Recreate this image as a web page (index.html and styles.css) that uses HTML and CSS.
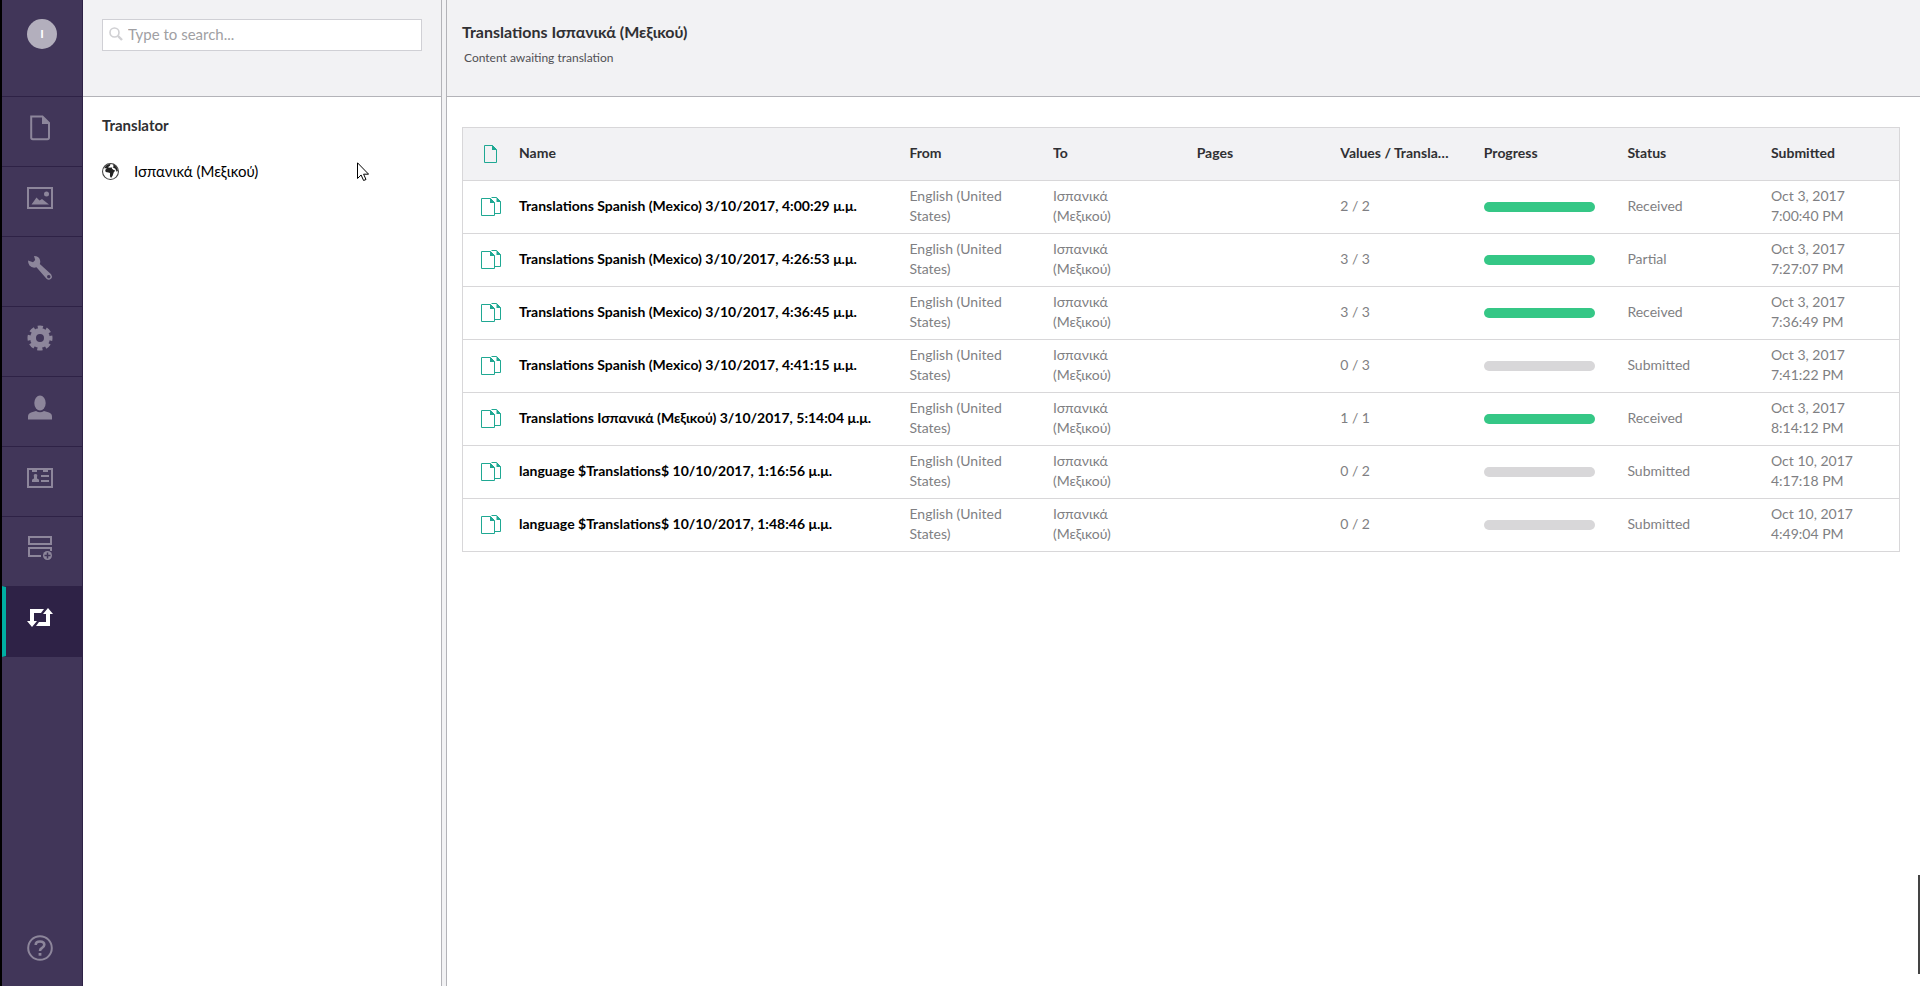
FILE: index.html
```
<!DOCTYPE html>
<html lang="en">
<head>
    <meta charset="UTF-8">
    <title>Translations</title>
    <link rel="stylesheet" href="styles.css">
</head>
<body>
<!-- shared row icon -->
<svg class="symbols" width="0" height="0">
    <symbol id="docs" viewBox="0 0 20 20">
        <path d="M10.500.5h5l4 4v12H14" fill="none" stroke="currentColor"/>
        <path d="M15.500 0v5H20z" fill="currentColor"/>
        <path d="M.5 1.500h9l4 4v13H.5z" fill="#fff" stroke="currentColor"/>
        <path d="M9 1v5h5z" fill="currentColor"/>
    </symbol>
</svg>
<div class="app">
    <nav class="rail">
        <button class="avatar" aria-label="Profile"><span>I</span></button>
        <a class="section" href="#" aria-label="Content">
            <svg viewBox="0 0 26 26"><path d="M4.200 1.500h11.300l6.500 6.500v14.500q0 1.700-1.700 1.700H5.900q-1.700 0-1.700-1.700z" fill="none" stroke="currentColor" stroke-width="2"/><path d="M15 1v8h8z" fill="currentColor"/></svg>
        </a>
        <a class="section" href="#" aria-label="Media">
            <svg viewBox="0 0 26 26"><path d="M1 3h24v20H1z" fill="none" stroke="currentColor" stroke-width="2"/><circle cx="19.500" cy="9" r="2.500" fill="currentColor"/><path d="M4.500 19.500l5-7 3 3 2.500-1.500 7 5.500z" fill="currentColor"/></svg>
        </a>
        <a class="section" href="#" aria-label="Settings">
            <svg viewBox="0 0 26 26"><path fill="currentColor" fill-rule="evenodd" d="M1 5.500l5 1.700 2.200-2.100L7 1q5 0 6 4 .7 2-.2 4l11.300 10.200q1.800 2.300 0 4.600-2.300 2-4.600 0L9.500 12.300Q5 13.500 2.500 10.500 1 8.500 1 5.500zM21.700 19.900a1.700 1.700 0 1 0 .1 0z"/></svg>
        </a>
        <a class="section" href="#" aria-label="Developer">
            <svg viewBox="0 0 26 26"><circle cx="13" cy="13" r="7" fill="none" stroke="currentColor" stroke-width="6"/><circle cx="13" cy="13" r="10.500" fill="none" stroke="currentColor" stroke-width="4" stroke-dasharray="5 3.247" stroke-dashoffset="2.500"/></svg>
        </a>
        <a class="section" href="#" aria-label="Users">
            <svg viewBox="0 0 26 26"><ellipse cx="13" cy="8" rx="5.700" ry="7.500" fill="currentColor"/><path fill="currentColor" d="M1 24.500v-3q0-3 3-4L9 16q4 2.500 8 0l5 1.500q3 1 3 4v3z"/></svg>
        </a>
        <a class="section" href="#" aria-label="Members">
            <svg viewBox="0 0 26 26"><path d="M1 4h24v18H1z" fill="none" stroke="currentColor" stroke-width="2"/><path fill="currentColor" d="M5 3h5v4H5zM16 3h5v4h-5zM5 17v-2q0-1 2-1.500V12q-1-3 1.500-3t1.500 3v1.500q2 .5 2 1.500v2zM14 10h8v2h-8zM14 15h8v2h-8z"/></svg>
        </a>
        <a class="section" href="#" aria-label="Forms">
            <svg viewBox="0 0 26 26"><path d="M2 2h22v7H2zM24 16v-3H2v8h12" fill="none" stroke="currentColor" stroke-width="2"/><circle cx="20.500" cy="20.500" r="5.500" fill="#413659"/><circle cx="20.500" cy="20.500" r="4.500" fill="currentColor"/><path d="M20.500 17.500v6M17.500 20.500h6" stroke="#413659" stroke-width="1.500"/></svg>
        </a>
        <a class="section active" href="#" aria-label="Translation">
            <svg viewBox="0 0 26 26"><path fill="currentColor" d="M3 4h14l-3 4H7v8h3l-5 6-5-6h3zM23 21H9l3-4h7V9h-3l5-6 5 6h-3z"/></svg>
        </a>
        <a class="help" href="#" aria-label="Help">
            <svg viewBox="0 0 26 26"><circle cx="13" cy="13" r="11.800" fill="none" stroke="currentColor" stroke-width="2"/><path d="M8.700 10q0-3.500 4.300-3.500t4.300 3.300q0 1.700-2.300 3.200-2 1-2 3" fill="none" stroke="currentColor" stroke-width="2.600"/><path d="M11.600 18h2.800v2.700h-2.800z" fill="currentColor"/></svg>
        </a>
    </nav>

    <aside class="tree">
        <div class="tree-header">
            <label class="search">
                <svg viewBox="0 0 14 14"><circle cx="5.500" cy="5.500" r="4.500" fill="none" stroke="currentColor" stroke-width="1.600"/><path d="M9 9l4 4" stroke="currentColor" stroke-width="2.400"/></svg>
                <input type="text" placeholder="Type to search..." aria-label="Search">
            </label>
        </div>
        <div class="tree-body">
            <h2>Translator</h2>
            <a class="tree-item" href="#">
                <svg viewBox="0 0 16 16"><circle cx="8" cy="8" r="7.500" fill="#fff" stroke="#444"/><path fill="#222" d="M2 5Q4 1 8 1l-.5 1.500L5.500 4l2 .5L9 4l.5 1.500 1.500 1 1.500.5-1.500 2-1 3-1.500 2-1-1.500V9.500L6 9 3.500 8.500 3 6.500 4.500 5zM10 1q4 1.500 5 6l-1 1.500-1.500-3L10 4l1-1z"/></svg>
                <span>Ισπανικά (Μεξικού)</span>
            </a>
        </div>
        <svg class="cursor" viewBox="0 0 12 19"><path d="M.5.8v15.700l3.600-3.500 2.500 5.500 2.400-1-2.400-5.300h5z" fill="#fff" stroke="#000"/></svg>
    </aside>

    <div class="splitter"></div>

    <main class="editor">
        <header class="editor-header">
            <h1>Translations Ισπανικά (Μεξικού)</h1>
            <p>Content awaiting translation</p>
        </header>
        <div class="editor-body">
            <table class="jobs">
                <colgroup>
                    <col class="col-icon">
                    <col class="col-name">
                    <col class="col-info" span="6">
                    <col class="col-date">
                </colgroup>
                <thead>
                    <tr>
                        <th class="icon"><svg viewBox="0 0 20 20"><path d="M3.500 1.500h8l4 4v13h-12z" fill="none" stroke="currentColor"/><path d="M11 1v5h5z" fill="currentColor"/></svg></th>
                        <th>Name</th>
                        <th>From</th>
                        <th>To</th>
                        <th>Pages</th>
                        <th>Values / Translations</th>
                        <th>Progress</th>
                        <th>Status</th>
                        <th>Submitted</th>
                    </tr>
                </thead>
                <tbody>
                    <tr>
                        <td class="icon"><svg><use href="#docs"/></svg></td>
                        <td class="name">Translations Spanish (Mexico) 3/10/2017, 4:00:29 μ.μ.</td>
                        <td>English (United States)</td>
                        <td>Ισπανικά (Μεξικού)</td>
                        <td></td>
                        <td>2 / 2</td>
                        <td><div class="bar"><div class="fill" style="width: 100%"></div></div></td>
                        <td>Received</td>
                        <td class="date">Oct 3, 2017 7:00:40 PM</td>
                    </tr>
                    <tr>
                        <td class="icon"><svg><use href="#docs"/></svg></td>
                        <td class="name">Translations Spanish (Mexico) 3/10/2017, 4:26:53 μ.μ.</td>
                        <td>English (United States)</td>
                        <td>Ισπανικά (Μεξικού)</td>
                        <td></td>
                        <td>3 / 3</td>
                        <td><div class="bar"><div class="fill" style="width: 100%"></div></div></td>
                        <td>Partial</td>
                        <td class="date">Oct 3, 2017 7:27:07 PM</td>
                    </tr>
                    <tr>
                        <td class="icon"><svg><use href="#docs"/></svg></td>
                        <td class="name">Translations Spanish (Mexico) 3/10/2017, 4:36:45 μ.μ.</td>
                        <td>English (United States)</td>
                        <td>Ισπανικά (Μεξικού)</td>
                        <td></td>
                        <td>3 / 3</td>
                        <td><div class="bar"><div class="fill" style="width: 100%"></div></div></td>
                        <td>Received</td>
                        <td class="date">Oct 3, 2017 7:36:49 PM</td>
                    </tr>
                    <tr>
                        <td class="icon"><svg><use href="#docs"/></svg></td>
                        <td class="name">Translations Spanish (Mexico) 3/10/2017, 4:41:15 μ.μ.</td>
                        <td>English (United States)</td>
                        <td>Ισπανικά (Μεξικού)</td>
                        <td></td>
                        <td>0 / 3</td>
                        <td><div class="bar"><div class="fill" style="width: 0%"></div></div></td>
                        <td>Submitted</td>
                        <td class="date">Oct 3, 2017 7:41:22 PM</td>
                    </tr>
                    <tr>
                        <td class="icon"><svg><use href="#docs"/></svg></td>
                        <td class="name">Translations Ισπανικά (Μεξικού) 3/10/2017, 5:14:04 μ.μ.</td>
                        <td>English (United States)</td>
                        <td>Ισπανικά (Μεξικού)</td>
                        <td></td>
                        <td>1 / 1</td>
                        <td><div class="bar"><div class="fill" style="width: 100%"></div></div></td>
                        <td>Received</td>
                        <td class="date">Oct 3, 2017 8:14:12 PM</td>
                    </tr>
                    <tr>
                        <td class="icon"><svg><use href="#docs"/></svg></td>
                        <td class="name">language $Translations$ 10/10/2017, 1:16:56 μ.μ.</td>
                        <td>English (United States)</td>
                        <td>Ισπανικά (Μεξικού)</td>
                        <td></td>
                        <td>0 / 2</td>
                        <td><div class="bar"><div class="fill" style="width: 0%"></div></div></td>
                        <td>Submitted</td>
                        <td class="date">Oct 10, 2017 4:17:18 PM</td>
                    </tr>
                    <tr>
                        <td class="icon"><svg><use href="#docs"/></svg></td>
                        <td class="name">language $Translations$ 10/10/2017, 1:48:46 μ.μ.</td>
                        <td>English (United States)</td>
                        <td>Ισπανικά (Μεξικού)</td>
                        <td></td>
                        <td>0 / 2</td>
                        <td><div class="bar"><div class="fill" style="width: 0%"></div></div></td>
                        <td>Submitted</td>
                        <td class="date">Oct 10, 2017 4:49:04 PM</td>
                    </tr>
                </tbody>
            </table>
        </div>
        <div class="edge"></div>
    </main>
</div>
</body>
</html>
```
FILE: styles.css
```
* {
    box-sizing: border-box;
}

body {
    margin: 0;
    font-family: Lato, "Open Sans", sans-serif;
    font-size: 14px;
    line-height: 20px;
    color: #303033;
    background: #fff;
}

h1, h2, p {
    margin: 0;
}

a {
    color: inherit;
    text-decoration: none;
}

svg {
    display: block;
}

.symbols {
    position: absolute;
}

.app {
    display: flex;
    min-height: 100vh;
}

/* Left section bar */
.rail {
    display: flex;
    flex-direction: column;
    flex: none;
    width: 83px;
    border-left: 2px solid #000;
    border-right: 1px solid #2e2246;
    background: #413659;
    color: #8d869b;
}

.avatar {
    height: 96px;
    padding: 19px 25px 47px;
    border: 0;
    background: none;
    font: 700 12px Lato, sans-serif;
    color: #fff;
}

.avatar span {
    display: block;
    width: 30px;
    height: 30px;
    line-height: 30px;
    border-radius: 50%;
    background: #b3afbd;
}

.section {
    height: 70px;
    padding: 18px 25px;
    border-top: 1px solid #2e2246;
}

.section svg, .help svg {
    width: 26px;
    height: 26px;
}

.active {
    height: 71px;
    padding-left: 21px;
    border-left: 4px solid #00aea2;
    border-bottom: 1px solid #2e2246;
    background: #2e2246;
    color: #fff;
}

.help {
    margin-top: auto;
    padding: 0 25px 25px;
}

/* Tree */
.tree {
    position: relative;
    flex: none;
    width: 358px;
}

.tree-header, .editor-header {
    height: 97px;
    border-bottom: 1px solid #b3b3b8;
    background: #f2f2f4;
}

.tree-header {
    padding: 19px 19px 0;
}

.search {
    display: flex;
    align-items: center;
    gap: 5px;
    height: 32px;
    padding: 0 6px 2px;
    border: 1px solid #d0d0d5;
    background: #fff;
    color: #d0d0d3;
}

.search svg {
    flex: none;
    width: 14px;
    height: 14px;
}

.search input {
    flex: 1;
    min-width: 0;
    padding: 0;
    border: 0;
    outline: 0;
    font: 15px Lato, sans-serif;
}

.search input::placeholder {
    color: #a0a0a3;
}

.tree-body {
    padding: 18px 19px;
}

.tree-body h2 {
    font-size: 15px;
    font-weight: 700;
}

.tree-item {
    display: flex;
    align-items: center;
    gap: 15px;
    margin-top: 26px;
    font-size: 15px;
    color: #000;
}

.tree-item svg {
    width: 17px;
    height: 17px;
}

.cursor {
    position: absolute;
    left: 274px;
    top: 162px;
    width: 12px;
    height: 19px;
}

.splitter {
    flex: none;
    width: 6px;
    border: 1px solid #b3b3b8;
    border-width: 0 1px;
    background: #f2f2f4;
}

/* Editor */
.editor {
    position: relative;
    flex: 1;
    min-width: 0;
}

.editor-header {
    padding: 22px 15px 0;
}

.editor-header h1 {
    font-size: 16px;
    font-weight: 700;
}

.editor-header p {
    margin-top: 6px;
    padding-left: 2px;
    font-size: 12px;
    color: #515054;
}

.editor-body {
    padding: 30px 20px 30px 15px;
}

.jobs {
    width: 100%;
    table-layout: fixed;
    border-spacing: 0;
    border: 1px solid #d8d7d9;
    border-bottom: 0;
}

.col-icon {
    width: 56px;
}

.col-info {
    width: 10%;
}

.col-date {
    width: 128px;
}

.jobs th, .jobs td {
    height: 53px;
    padding: 0 32px 2px 0;
    border-bottom: 1px solid #d8d7d9;
    text-align: left;
}

.jobs th {
    overflow: hidden;
    white-space: nowrap;
    text-overflow: ellipsis;
    font-weight: 700;
    background: #f2f2f4;
}

.jobs td {
    color: #7f7f83;
}

.jobs .icon {
    padding: 0 0 0 18px;
    color: #1fa893;
}

.icon svg {
    width: 20px;
    height: 20px;
}

.jobs .name {
    padding-right: 15px;
    font-weight: 700;
    color: #000;
}

.jobs .date {
    padding-right: 40px;
}

.bar {
    height: 10px;
    margin-top: 2px;
    border-radius: 5px;
    overflow: hidden;
    background: #d8d7d9;
}

.fill {
    height: 100%;
    background: #35c786;
}

.edge {
    position: absolute;
    right: 0;
    bottom: 12px;
    width: 2px;
    height: 99px;
    background: #444;
}
```
